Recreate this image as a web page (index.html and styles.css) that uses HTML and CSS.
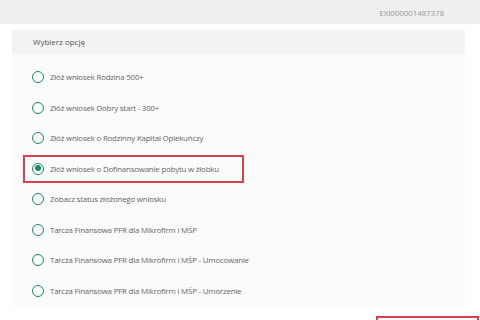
FILE: index.html
```html
<!DOCTYPE html>
<html lang="pl">
<head>
    <meta charset="UTF-8">
    <meta name="viewport" content="width=device-width, initial-scale=1.0">
    <title>Wybierz opcję</title>
    <link rel="stylesheet" href="styles.css">
</head>
<body>
    <div class="topbar">
        <span class="ref-no">EXI000001487378</span>
    </div>

    <div class="card">
        <div class="card-head">Wybierz opcję</div>
        <div class="options">
            <label class="option"><span class="radio"></span>Złóż wniosek Rodzina 500+</label>
            <label class="option"><span class="radio"></span>Złóż wniosek Dobry start - 300+</label>
            <label class="option"><span class="radio"></span>Złóż wniosek o Rodzinny Kapitał Opiekuńczy</label>
            <label class="option selected"><span class="radio checked"></span>Złóż wniosek o Dofinansowanie pobytu w żłobku</label>
            <label class="option"><span class="radio"></span>Zobacz status złożonego wniosku</label>
            <label class="option"><span class="radio"></span>Tarcza Finansowa PFR dla Mikrofirm i MŚP</label>
            <label class="option"><span class="radio"></span>Tarcza Finansowa PFR dla Mikrofirm i MŚP - Umocowanie</label>
            <label class="option"><span class="radio"></span>Tarcza Finansowa PFR dla Mikrofirm i MŚP - Umorzenie</label>
        </div>
    </div>

    <div class="footer">
        <button class="next-btn"></button>
    </div>
</body>
</html>
```

FILE: styles.css
```css
body {
    background-color: #fff;
    font-family: "Open Sans", "Liberation Sans", sans-serif;
    color: #555;
    margin: 0;
    padding: 0;
    height: 320px;
    overflow: hidden;
}

.topbar {
    background-color: #efefef;
    height: 24px;
    display: flex;
    align-items: center;
    justify-content: flex-end;
    padding-right: 36px;
}

.ref-no {
    font-size: 8px;
    color: #9a9a9a;
    letter-spacing: -0.1px;
}

.card {
    background-color: #fbfbfb;
    margin: 6px 15px 0 12px;
    padding-bottom: 2px;
}

.card-head {
    background-color: #f3f3f3;
    height: 24px;
    line-height: 24px;
    padding-left: 21px;
    font-size: 8px;
    color: #555;
}

.options {
    padding-top: 8px;
}

.option {
    display: flex;
    align-items: center;
    width: fit-content;
    height: 30.5px;
    margin-left: 10px;
    padding: 0 26px 0 10px;
    font-size: 7.9px;
    letter-spacing: -0.2px;
    color: #666;
    box-sizing: border-box;
}

.option.selected {
    outline: 2px solid #d8404e;
    outline-offset: -3px;
}

.radio {
    width: 12px;
    height: 12px;
    border: 1.5px solid #1b8a66;
    border-radius: 50%;
    box-sizing: border-box;
    margin-right: 6px;
    flex-shrink: 0;
    position: relative;
}

.radio.checked::after {
    content: "";
    position: absolute;
    top: 1.5px;
    left: 1.5px;
    width: 6px;
    height: 6px;
    border-radius: 50%;
    background-color: #1b8a66;
}

.footer {
    display: flex;
    justify-content: flex-end;
    padding-right: 1px;
    margin-top: 8px;
}

.next-btn {
    width: 103px;
    height: 24px;
    border: 2px solid #d8404e;
    background-color: #fff;
    padding: 0;
}
```
